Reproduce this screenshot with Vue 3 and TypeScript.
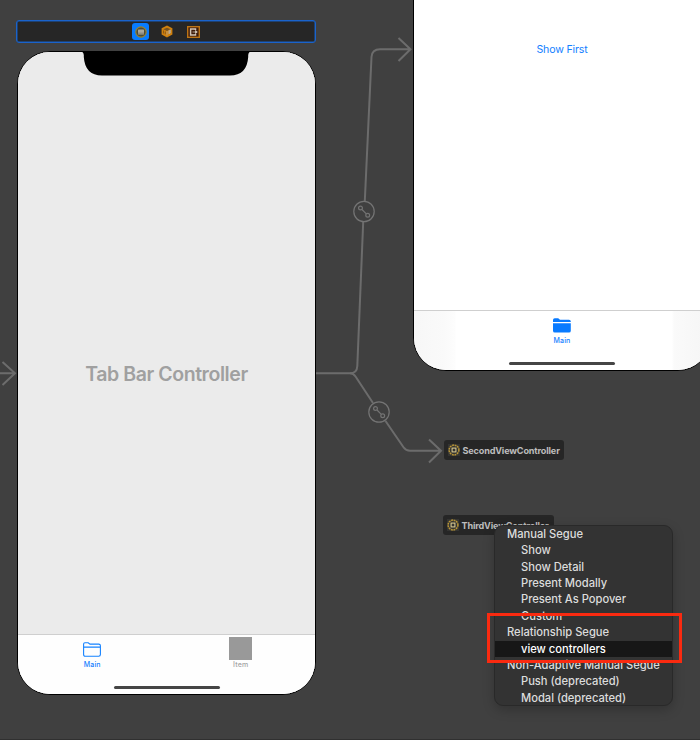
<script setup lang="ts">
interface MenuRow {
  label: string
  heading?: boolean
  selected?: boolean
}

const menuRows: MenuRow[] = [
  { label: 'Manual Segue', heading: true },
  { label: 'Show' },
  { label: 'Show Detail' },
  { label: 'Present Modally' },
  { label: 'Present As Popover' },
  { label: 'Custom' },
  { label: 'Relationship Segue', heading: true },
  { label: 'view controllers', selected: true },
  { label: 'Non-Adaptive Manual Segue', heading: true },
  { label: 'Push (deprecated)' },
  { label: 'Modal (deprecated)' },
]

const references = [
  { name: 'SecondViewController', slot: 'second' },
  { name: 'ThirdViewController', slot: 'third' },
]

const badges = [
  { x: 364, y: 211.5 },
  { x: 379, y: 412 },
]
</script>

<template>
  <main class="canvas">
    <svg class="segues" width="700" height="740" viewBox="0 0 700 740" fill="none">
      <g class="wire">
        <path d="M0 373.3H15M2.5 362L15 373.3L2.5 385" />
        <path d="M315 373.3H350Q357 373.3 357.3 366L363.2 222M364.8 201L371.5 57Q372 49.3 380 49.3H410M398.5 38L410.5 49.3L398.5 61" />
        <path d="M350 373.3Q353.5 373.3 355.7 376.7L373 403M385.5 421L403.5 447.2Q406 450.7 410 450.7H441M429 439.5L441 450.7L429 462.5" />
      </g>
      <g v-for="badge in badges" :key="badge.y" :transform="`translate(${badge.x} ${badge.y})`" class="badge">
        <circle r="10.2" />
        <circle cx="-3.5" cy="-3.5" r="1.9" />
        <circle cx="3.7" cy="3.7" r="1.9" />
        <path d="M-2 -2L2.3 2.3" />
      </g>
    </svg>

    <div class="scene-dock">
      <span class="dock-item active">
        <svg width="12" height="12" viewBox="0 0 12 12">
          <circle cx="6" cy="6" r="5.2" fill="#4c4c3c" stroke="#9a842f" stroke-width="1.2" />
          <rect x="3" y="3.5" width="6" height="5" rx=".6" fill="#aaa79c" />
          <path d="M3 7.2H9" stroke="#77776c" stroke-width=".8" />
        </svg>
      </span>
      <span class="dock-item">
        <svg width="12" height="13" viewBox="0 0 12 13">
          <path d="M6 .5L11.4 3.3V9.6L6 12.5L.6 9.6V3.3Z" fill="#cf800d" />
          <path d="M2.3 4.3L6 2.8L9.7 4.3L6 6Z" fill="#77521f" />
          <path d="M2.5 5.5V8.5M4.3 6.5V9.3" stroke="#8b5716" />
          <path d="M6 6V10.5M7.8 5.6L9.4 5V8L7.8 8.8Z" fill="#b8a992" stroke="#b8a992" stroke-width=".7" />
        </svg>
      </span>
      <span class="dock-item">
        <svg width="13" height="12" viewBox="0 0 13 12">
          <rect x=".7" y=".7" width="11.6" height="10.6" fill="#3d1a08" stroke="#bd7415" stroke-width="1.4" />
          <path d="M8.5 4V2.9H3.6V9.1H8.5V8" fill="none" stroke="#d1c4b5" stroke-width="1.5" />
          <path d="M5.5 6H10M8.5 4.5L10.3 6L8.5 7.5Z" fill="#d1c4b5" stroke="#d1c4b5" stroke-width=".8" />
        </svg>
      </span>
    </div>

    <section class="phone tab-phone">
      <svg class="notch" width="172" height="25" viewBox="0 0 172 25">
        <path d="M0 0H172Q168.5 .6 168.2 4V6Q167 24.5 150 24.5H22Q5 24.5 3.8 6V4Q3.5 .6 0 0Z" />
      </svg>
      <div class="screen"><h1>Tab Bar Controller</h1></div>
      <footer class="tab-bar">
        <div class="tabs">
          <div class="tab">
            <svg class="folder" width="18" height="15" viewBox="0 0 18 15" fill="none" stroke="#1482ff" stroke-width="1.1">
              <path d="M.6 12.5V2Q.6.7 2 .7H5.2L7 2.1H15.7Q17.4 2.1 17.4 3.8V12.6Q17.4 14.3 15.7 14.3H2.3Q.6 14.3 .6 12.5ZM.6 5.1H17.4" />
            </svg>
            <span>Main</span>
          </div>
          <div class="tab idle">
            <i class="placeholder"></i>
            <span>Item</span>
          </div>
        </div>
        <div class="home-indicator"></div>
      </footer>
    </section>

    <section class="phone first-phone">
      <div class="screen white"><button>Show First</button></div>
      <footer class="tab-bar shaded">
        <div class="tabs">
          <div class="tab">
            <svg class="folder" width="18" height="15" viewBox="0 0 18 15" fill="#087aff">
              <path d="M0 4.1V2Q0 .2 1.8 .2H5.2L7 1.7H16Q17.8 1.7 17.8 3.5V4.1ZM0 5.2H17.8V12.7Q17.8 14.6 16 14.6H1.8Q0 14.6 0 12.7Z" />
            </svg>
            <span>Main</span>
          </div>
        </div>
        <div class="home-indicator"></div>
      </footer>
    </section>

    <div v-for="item in references" :key="item.name" class="reference" :class="item.slot">
      <svg width="12" height="12" viewBox="0 0 12 12" fill="none">
        <rect width="12" height="12" fill="#343432" />
        <circle cx="6" cy="6" r="4.9" stroke="#b99536" stroke-width="1.5" stroke-dasharray="1.9 .67" />
        <rect x="4.1" y="4.1" width="3.8" height="3.8" stroke="#d5c58c" stroke-width="1.1" />
      </svg>
      <span>{{ item.name }}</span>
    </div>

    <ul class="segue-menu">
      <li v-for="row in menuRows" :key="row.label" :class="{ heading: row.heading, selected: row.selected }">{{ row.label }}</li>
    </ul>
    <div class="highlight"></div>
  </main>
</template>

<style>
body {
  margin: 0;
  background: #404040;
}
</style>

<style scoped>
* {
  box-sizing: border-box;
}

.canvas {
  position: relative;
  width: 700px;
  height: 740px;
  overflow: hidden;
  background: #404040;
  border-bottom: 1px solid #303030;
  font-family: Inter, "Liberation Sans", sans-serif;
}

.segues {
  position: absolute;
  inset: 0;
}

.wire {
  stroke: #6c6c6c;
  stroke-width: 2;
}

.badge {
  stroke: #747474;
  stroke-width: 1.2;
}

.scene-dock {
  position: absolute;
  left: 16px;
  top: 20px;
  width: 300px;
  height: 23px;
  display: flex;
  align-items: center;
  justify-content: center;
  gap: 9px;
  padding-left: 2px;
  background: #262626;
  border: 1px solid #1a63cb;
  border-radius: 3px;
  box-shadow: inset 0 0 0 .5px #175dbe;
}

.dock-item {
  display: flex;
  align-items: center;
  justify-content: center;
  width: 17.5px;
  height: 17.5px;
  border-radius: 3px;
}

.dock-item.active {
  background: #087cff;
}

.phone {
  position: absolute;
  width: 299px;
  height: 644px;
  display: flex;
  flex-direction: column;
  overflow: hidden;
  border: 1px solid #000;
  border-radius: 33px;
  background: #fff;
}

.tab-phone {
  left: 17px;
  top: 51px;
}

.first-phone {
  left: 413px;
  top: -273px;
  width: 298px;
}

.notch {
  position: absolute;
  left: 62px;
  top: -1px;
}

.screen {
  flex: 1;
  display: flex;
  align-items: center;
  justify-content: center;
  background: #ebebeb;
}

.screen.white {
  background: #fff;
}

h1 {
  margin: 62px 0 0;
  color: #a0a0a0;
  font-size: 19.5px;
  font-weight: 600;
  line-height: 24px;
  letter-spacing: -.43px;
  white-space: nowrap;
}

button {
  padding: 0;
  margin-top: 61px;
  border: 0;
  background: none;
  color: #147fff;
  font: 400 10.6px/14px Inter, sans-serif;
  letter-spacing: -.15px;
}

.tab-bar {
  height: 60px;
  display: flex;
  flex-direction: column;
  align-items: center;
  justify-content: space-between;
  padding-bottom: 5px;
  border-top: 1px solid #cfcfcf;
  background: #fefefe;
}

.tab-bar.shaded {
  background: linear-gradient(90deg, #f7f7f7, #fafafa 30px, #fdfdfd 41px, #fff 42px, #fff 258px, #fafafa 260px, #f5f5f5);
}

.tabs {
  width: 100%;
  display: flex;
}

.tab {
  flex: 1;
  display: flex;
  flex-direction: column;
  align-items: center;
  color: #1680ff;
  font-size: 7px;
  font-weight: 500;
  line-height: 8px;
  letter-spacing: .15px;
}

.folder {
  margin: 7px 0 4px;
}

.tab.idle {
  color: #a5a5a5;
}

.placeholder {
  width: 23px;
  height: 23px;
  margin: 2px 0 1px;
  background: #999;
}

.home-indicator {
  width: 106px;
  height: 3.5px;
  border-radius: 2px;
  background: #454545;
}

.reference {
  position: absolute;
  left: 443px;
  height: 20px;
  display: flex;
  align-items: center;
  gap: 2.5px;
  padding-left: 4px;
  border-radius: 3px;
  background: #262626;
  color: #bdbdbd;
  font-size: 9.1px;
  font-weight: 700;
  letter-spacing: -.16px;
  white-space: nowrap;
}

.second {
  left: 444px;
  top: 440px;
  width: 120px;
}

.third {
  top: 515px;
  width: 111px;
}

.segue-menu {
  position: absolute;
  left: 494px;
  top: 525px;
  width: 179px;
  height: 181px;
  margin: 0;
  padding: 0;
  list-style: none;
  border: 1px solid #292929;
  border-radius: 9px;
  background: #333;
  box-shadow: 0 4px 12px rgb(0 0 0 / 22%);
  color: #dcdcdc;
  font-size: 11.2px;
  font-weight: 500;
  line-height: 16.4px;
  letter-spacing: -.02px;
  white-space: nowrap;
}

.segue-menu li {
  height: 16.36px;
  padding-left: 26px;
}

.segue-menu .heading {
  padding-left: 12px;
}

.segue-menu .selected {
  background: #171717;
  color: #fff;
}

.highlight {
  position: absolute;
  left: 487px;
  top: 613px;
  width: 195px;
  height: 50px;
  border: 3px solid #fa2a10;
}
</style>
